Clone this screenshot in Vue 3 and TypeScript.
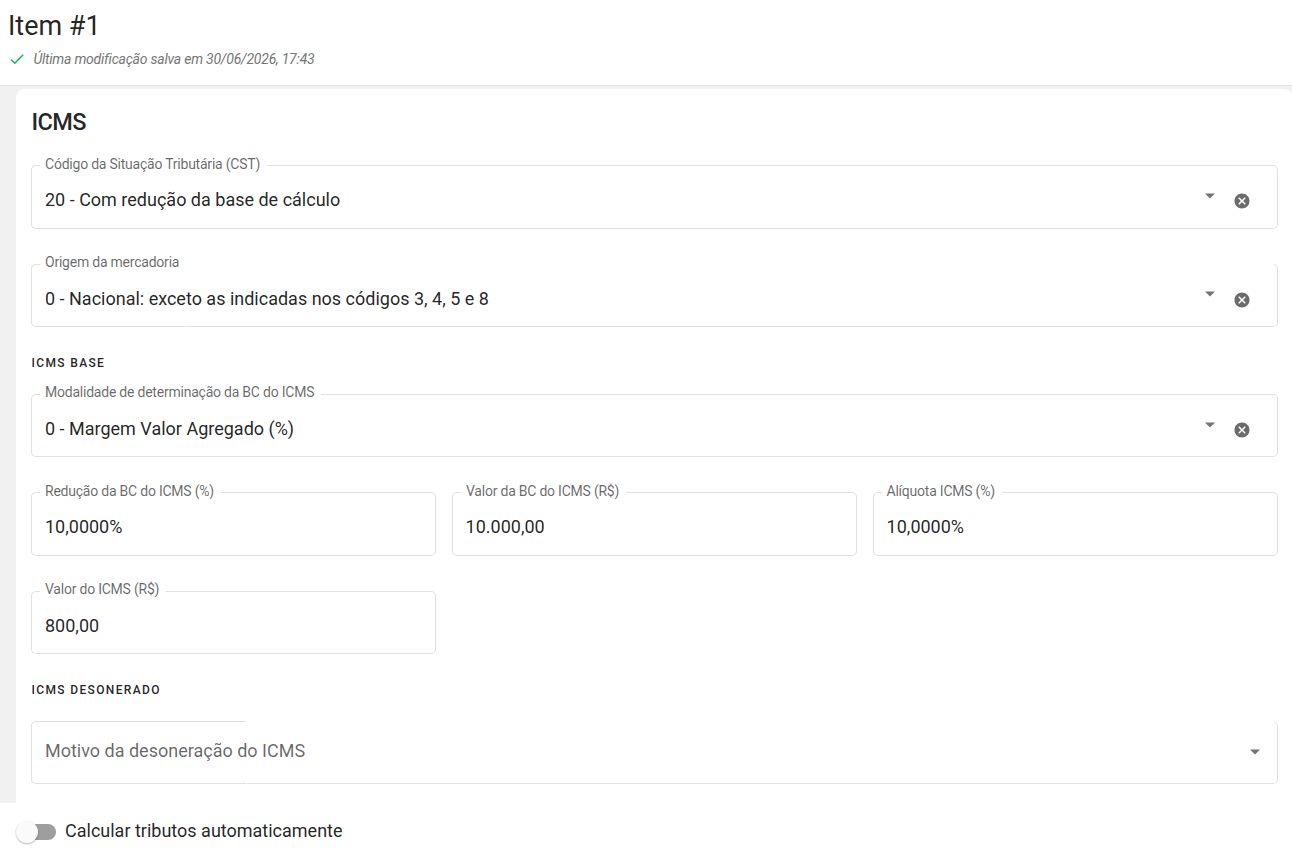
<script setup lang="ts">
interface Field {
  id: string
  label: string
  value: string
  notch?: 'wide'
}

const selects: Field[] = [
  { id: 'cst', label: 'Código da Situação Tributária (CST)', value: '20 - Com redução da base de cálculo' },
  { id: 'origin', label: 'Origem da mercadoria', value: '0 - Nacional: exceto as indicadas nos códigos 3, 4, 5 e 8', notch: 'wide' },
  { id: 'mode', label: 'Modalidade de determinação da BC do ICMS', value: '0 - Margem Valor Agregado (%)' },
]

const amounts: Field[] = [
  { id: 'reduction', label: 'Redução da BC do ICMS (%)', value: '10,0000%' },
  { id: 'base-amount', label: 'Valor da BC do ICMS (R$)', value: '10.000,00' },
  { id: 'rate', label: 'Alíquota ICMS (%)', value: '10,0000%' },
  { id: 'amount', label: 'Valor do ICMS (R$)', value: '800,00' },
]
</script>

<template>
  <div class="page">
    <header class="header">
      <h1 class="title">Item #1</h1>
      <p class="saved">
        <svg class="check" viewBox="0 0 24 24"><path d="M9 16.17L4.83 12l-1.42 1.41L9 19 21 7l-1.41-1.41z" /></svg>
        <span>Última modificação salva em 30/06/2026, 17:43</span>
      </p>
    </header>

    <main class="body">
      <section class="card">
        <h2 class="heading">ICMS</h2>

        <div v-for="f in selects" :key="f.id" :class="['block', f.id]">
          <h3 v-if="f.id === 'mode'" class="sub">ICMS BASE</h3>
          <div class="field">
            <div class="outline">
              <span class="start"></span>
              <span class="notch"><label class="label">{{ f.label }}</label></span>
              <span :class="['end', { open: f.notch === 'wide' }]"></span>
            </div>
            <span class="value">{{ f.value }}</span>
            <svg class="arrow" viewBox="0 0 10 6"><path d="M0 .5h10L5 5.5z" /></svg>
            <svg class="clear" viewBox="0 0 24 24"><path d="M12 2C6.47 2 2 6.47 2 12s4.47 10 10 10 10-4.47 10-10S17.53 2 12 2zm5 13.59L15.59 17 12 13.41 8.41 17 7 15.59 10.59 12 7 8.41 8.41 7 12 10.59 15.59 7 17 8.41 13.41 12 17 15.59z" /></svg>
          </div>
        </div>

        <div class="amounts">
          <div v-for="f in amounts" :key="f.id" :class="['field', f.id]">
            <div class="outline">
              <span class="start"></span>
              <span class="notch"><label class="label">{{ f.label }}</label></span>
              <span class="end"></span>
            </div>
            <span class="value">{{ f.value }}</span>
          </div>
        </div>

        <h3 class="sub relief">ICMS DESONERADO</h3>
        <div class="field empty">
          <div class="outline">
            <span class="start"></span>
            <span class="notch"></span>
            <span class="end open"></span>
          </div>
          <span class="value placeholder">Motivo da desoneração do ICMS</span>
          <svg class="arrow" viewBox="0 0 10 6"><path d="M0 .5h10L5 5.5z" /></svg>
        </div>
      </section>
    </main>

    <footer class="footer">
      <span class="toggle"><span class="thumb"></span></span>
      <span class="toggle-label">Calcular tributos automaticamente</span>
    </footer>
  </div>
</template>

<style>
body {
  margin: 0;
  overflow: hidden;
}
</style>

<style scoped>
.page {
  display: flex;
  flex-direction: column;
  height: 858px;
  background: #fff;
  color: rgba(0, 0, 0, 0.87);
  font-family: Roboto, "Liberation Sans", sans-serif;
}
.page * {
  box-sizing: border-box;
}
.header {
  flex: none;
  height: 86px;
  padding: 8px 8px 0;
  border-bottom: 1px solid #e0e0e0;
}
.title {
  margin: 0;
  font-size: 27px;
  font-weight: 400;
  line-height: 36px;
}
.saved {
  display: flex;
  align-items: center;
  gap: 7.4px;
  margin: 5px 0 0;
  font-size: 14px;
  font-style: italic;
  line-height: 20px;
  letter-spacing: -0.225px;
  color: #757575;
}
.check {
  width: 18px;
  height: 18px;
  fill: #11b85c;
}
.body {
  flex: none;
  height: 717px;
  padding: 3px 0 0 16px;
  background: #f1f1f1;
}
.card {
  height: 714px;
  padding: 17px 14px 0 15px;
  border-radius: 8px 8px 0 0;
  background: #fff;
}
.heading {
  margin: 0 0 27px;
  padding-left: 0.5px;
  font-size: 23.5px;
  font-weight: 500;
  line-height: 32px;
  letter-spacing: -0.6px;
}
.sub {
  margin: 0;
  padding-left: 0.5px;
  font-size: 12px;
  font-weight: 500;
  line-height: 16px;
  letter-spacing: 1.35px;
}
.field {
  position: relative;
  display: flex;
  align-items: flex-start;
  height: 63px;
  padding: 0 27px 0 14px;
}
.cst .field,
.reduction,
.base-amount,
.rate {
  height: 64px;
}
.origin {
  margin-top: 35px;
}
.mode {
  margin-top: 28px;
}
.mode .sub {
  margin-bottom: 23px;
}
.outline {
  position: absolute;
  inset: 0;
  display: flex;
}
.start,
.end {
  border: 1px solid #e0e0e0;
}
.start {
  flex: none;
  width: 9px;
  border-right: 0;
  border-radius: 5px 0 0 5px;
}
.end {
  flex: 1;
  border-left: 0;
  border-radius: 0 5px 5px 0;
}
.notch {
  flex: none;
  padding: 0 7px 0 5px;
  border-bottom: 1px solid #e0e0e0;
}
.end.open {
  margin-left: 1px;
  clip-path: polygon(0 6px, calc(100% - 4px) 6px, calc(100% - 4px) 0, 100% 0, 100% 100%, 0 100%);
}
.label {
  display: block;
  margin-top: -10px;
  font-size: 14px;
  line-height: 18px;
  letter-spacing: -0.225px;
  color: rgba(0, 0, 0, 0.6);
  white-space: nowrap;
}
.origin .label,
.mode .label,
.amount .label {
  margin-top: -11px;
}
.rate .label {
  margin-left: -0.5px;
}
.value {
  flex: 1;
  padding-top: 22px;
  font-size: 18px;
  line-height: 26px;
  white-space: nowrap;
}
.base-amount .value,
.rate .value {
  margin-left: -0.4px;
}
.arrow {
  flex: none;
  width: 10px;
  height: 6px;
  margin-top: 28px;
  fill: #757575;
}
.origin .arrow {
  margin-top: 27px;
}
.clear {
  flex: none;
  width: 18px;
  height: 18px;
  margin: 27px 0 0 18px;
  fill: #6b6b6b;
}
.amounts {
  display: grid;
  grid-template-columns: repeat(3, 1fr);
  gap: 35px 16px;
  margin-top: 35px;
}
.relief {
  margin-top: 28px;
}
.empty {
  margin-top: 23px;
  padding-right: 18px;
}
.empty .notch {
  width: 206px;
  border-top: 1px solid #e0e0e0;
}
.empty .value {
  padding-top: 17px;
}
.placeholder {
  color: rgba(0, 0, 0, 0.6);
}
.footer {
  display: flex;
  flex: 1;
  align-items: center;
  gap: 9px;
  padding: 0 16px 0 20px;
}
.toggle {
  position: relative;
  width: 36px;
  height: 16px;
  margin-top: 2px;
  border-radius: 8px;
  background: #9e9e9e;
}
.thumb {
  position: absolute;
  top: -3px;
  left: -4px;
  width: 22px;
  height: 22px;
  border-radius: 50%;
  background: #fafafa;
  box-shadow: 0 1px 2px rgba(0, 0, 0, 0.3);
}
.toggle-label {
  font-size: 18px;
  line-height: 26px;
}
</style>
